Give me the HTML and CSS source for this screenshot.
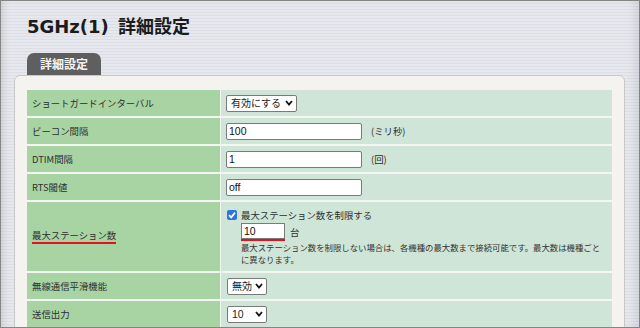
FILE: index.html
```html
<!DOCTYPE html>
<html lang="ja">
<head>
<meta charset="utf-8">
<title>5GHz(1) 詳細設定</title>
<link rel="stylesheet" href="styles.css">
</head>
<body>
<div class="frame">
  <h1 class="title">5GHz(1) 詳細設定</h1>
  <div class="tab">詳細設定</div>
  <div class="panel">
    <div class="grid">
      <div class="label">ショートガードインターバル</div>
      <div class="value">
        <span class="select sel-wide"><span>有効にする</span><svg class="chev" width="8" height="6" viewBox="0 0 8 6"><polyline points="1,1 4,4.5 7,1" fill="none" stroke="#111" stroke-width="1.8"/></svg></span>
      </div>

      <div class="label">ビーコン間隔</div>
      <div class="value">
        <span class="input">100</span><span class="unit">(ミリ秒)</span>
      </div>

      <div class="label">DTIM間隔</div>
      <div class="value">
        <span class="input">1</span><span class="unit">(回)</span>
      </div>

      <div class="label">RTS閾値</div>
      <div class="value">
        <span class="input">off</span>
      </div>

      <div class="label"><span class="marked">最大ステーション数</span></div>
      <div class="value value-stack">
        <div class="check-line">
          <span class="checkbox"><svg width="10" height="10" viewBox="0 0 10 10"><polyline points="2,5.2 4.2,7.4 8,2.6" fill="none" stroke="#fff" stroke-width="1.7"/></svg></span>
          <span>最大ステーション数を制限する</span>
        </div>
        <div class="count-line">
          <span class="marked-input"><span class="input small">10</span></span>
          <span class="unit-dai">台</span>
        </div>
        <p class="note">最大ステーション数を制限しない場合は、各機種の最大数まで接続可能です。最大数は機種ごと<br>に異なります。</p>
      </div>

      <div class="label">無線通信平滑機能</div>
      <div class="value">
        <span class="select sel-narrow"><span>無効</span><svg class="chev" width="8" height="6" viewBox="0 0 8 6"><polyline points="1,1 4,4.5 7,1" fill="none" stroke="#111" stroke-width="1.8"/></svg></span>
      </div>

      <div class="label">送信出力</div>
      <div class="value">
        <span class="select sel-narrow"><span class="num">10</span><svg class="chev" width="8" height="6" viewBox="0 0 8 6"><polyline points="1,1 4,4.5 7,1" fill="none" stroke="#111" stroke-width="1.8"/></svg></span>
      </div>
    </div>
  </div>
</div>
</body>
</html>
```

FILE: styles.css
```css
html, body {
  margin: 0;
  padding: 0;
}

body {
  font-family: "Noto Sans CJK JP", sans-serif;
  color: #333;
}

.frame {
  width: 640px;
  height: 328px;
  box-sizing: border-box;
  border: 1px solid #858585;
  overflow: hidden;
  background: repeating-linear-gradient(to bottom, #e6e8ed 0, #e6e8ed 2px, #dcdfe5 2px, #dcdfe5 3px);
  box-shadow: inset 6px 0 6px -3px rgba(0, 0, 0, 0.10), inset -12px 0 8px -8px rgba(60, 60, 90, 0.12);
}

.title {
  margin: 15px 0 0 26px;
  font-family: "DejaVu Sans", "Noto Sans CJK JP", sans-serif;
  font-size: 18px;
  font-weight: bold;
  line-height: 21px;
  height: 21px;
  color: #1b1b1b;
  word-spacing: 3px;
}

.tab {
  margin: 16px 0 0 26px;
  width: 74px;
  height: 22px;
  line-height: 22px;
  text-align: center;
  background: #5f5f5f;
  color: #f4f4f4;
  font-size: 12px;
  font-weight: bold;
  border-radius: 7px 7px 0 0;
}

.panel {
  margin-left: 13px;
  width: 611px;
  box-sizing: border-box;
  background: #f4f3ef;
  border: 1px solid #c8c8c6;
  border-radius: 6px;
  padding: 14px 12px 20px 12px;
}

.grid {
  display: grid;
  grid-template-columns: 193px 1fr;
  grid-template-rows: 26px 26px 26px 26px 69px 26px 26px;
  column-gap: 1px;
  row-gap: 2px;
  background: #f3f6f3;
}

.label {
  background: #a8d4a3;
  display: flex;
  align-items: center;
  padding-left: 5px;
  font-size: 9.4px;
  line-height: 12px;
  color: #2e2e2e;
}

.value {
  background: #cee5d7;
  display: flex;
  align-items: center;
  padding-left: 5px;
  font-size: 9.4px;
  line-height: 12px;
  color: #2e2e2e;
}

.select {
  height: 17px;
  box-sizing: border-box;
  border: 1px solid #7a7a7a;
  border-radius: 2px;
  background: #fff;
  display: inline-flex;
  align-items: center;
  justify-content: space-between;
  padding: 0 3px 0 4px;
  font-size: 10px;
  color: #222;
}

.sel-wide {
  width: 71px;
}

.sel-narrow {
  width: 40px;
  margin-left: 1px;
}

.num {
  font-family: "Liberation Sans", sans-serif;
  font-size: 10.5px;
}

.chev {
  display: block;
}

.input {
  display: inline-flex;
  align-items: center;
  width: 136px;
  height: 17px;
  box-sizing: border-box;
  border: 1px solid #7a7a7a;
  border-radius: 2px;
  background: #fff;
  padding-left: 2px;
  font-family: "Liberation Sans", sans-serif;
  font-size: 10.5px;
  color: #111;
}

.unit {
  margin-left: 9px;
}

.value-stack {
  flex-direction: column;
  align-items: flex-start;
  justify-content: flex-start;
  padding-top: 6px;
  padding-left: 6px;
}

.check-line {
  display: flex;
  align-items: center;
  height: 14px;
  gap: 4px;
}

.checkbox {
  width: 10px;
  height: 10px;
  border-radius: 2px;
  background: #2f72e0;
  display: inline-flex;
}

.count-line {
  display: flex;
  align-items: center;
  margin: 1px 0 0 14px;
}

.marked-input {
  display: block;
  border-bottom: 2px solid #e8101a;
}

.input.small {
  width: 44px;
  height: 16px;
  border-radius: 0;
  display: flex;
}

.unit-dai {
  margin-left: 5px;
}

.note {
  margin: 0 0 0 14px;
  font-size: 8.4px;
  line-height: 12.3px;
  white-space: nowrap;
  color: #333;
}

.marked {
  display: inline-block;
  border-bottom: 2px solid #e8101a;
  padding-bottom: 1px;
  line-height: 12px;
}
```
